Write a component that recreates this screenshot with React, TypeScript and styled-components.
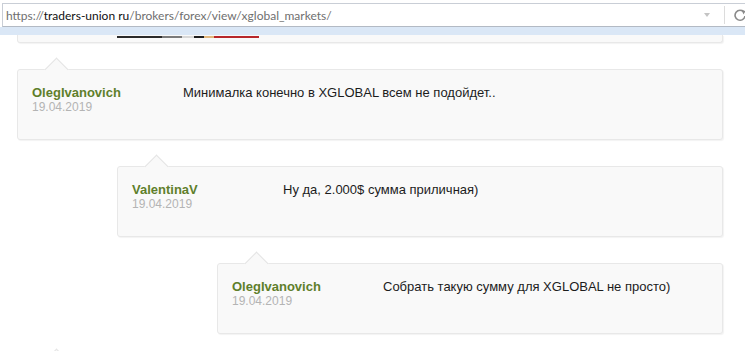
import styled, { createGlobalStyle } from "styled-components";

const GlobalStyle = createGlobalStyle`
	html, body {
		margin: 0;
		padding: 0;
		background: #fff;
		overflow: hidden;
	}
	body {
		width: 745px;
		height: 351px;
		font-family: "Liberation Sans", Arial, sans-serif;
	}
`

const Window = styled.div`
	display: flex;
	flex-direction: column;
	height: 351px;
	overflow: hidden;

	& > * {
		flex: none;
	}
`

const AddressBar = styled.div`
	display: flex;
	align-items: center;
	height: 22px;
	margin: 3px 0 0 2px;
	border-top: 1px solid #c9ced6;
	border-left: 1px solid #c9ced6;
	border-bottom: 1px solid #b3bac4;
	background: #fff;
`

const Url = styled.div`
	flex: 1;
	padding-left: 3px;
	font-family: Lato, "Open Sans", sans-serif;
	font-size: 12px;
	color: #6f6f6f;
	white-space: nowrap;
`

const Domain = styled.span`
	color: #111;
`

const DropArrow = styled.span`
	width: 0;
	height: 0;
	margin-right: 14px;
	border-left: 3px solid transparent;
	border-right: 3px solid transparent;
	border-top: 4px solid #c4c4c4;
`

const Divider = styled.span`
	width: 1px;
	height: 18px;
	background: #dcdcdc;
	margin-right: 8px;
`

const Reload = styled.svg`
	flex: none;
	width: 14px;
	height: 14px;
	margin-right: -2px;
`

const Toolbar = styled.div`
	height: 8px;
	background: #dae7f6;
`

const Feed = styled.div`
	display: flex;
	flex-direction: column;
	padding: 0 22px 0 17px;
`

const Item = styled.div<{ $indent: number }>`
	margin-left: ${p => p.$indent}px;
	margin-top: 14px;
	padding-top: 12px;
`

const Card = styled.div`
	position: relative;
	display: flex;
	box-sizing: border-box;
	height: 71px;
	padding-top: 15px;
	background: #f9f9f9;
	border: 1px solid #e8e8e8;
	border-radius: 3px;
	box-shadow: 1px 1px 1px rgba(0, 0, 0, 0.05);

	&::before {
		content: "";
		position: absolute;
		left: 30px;
		top: -9px;
		width: 16px;
		height: 16px;
		background: #f9f9f9;
		border-top: 1px solid #e4e4e4;
		border-left: 1px solid #e4e4e4;
		transform: rotate(45deg);
	}
`

const CutCard = styled.div`
	box-sizing: border-box;
	height: 8px;
	padding: 1px 0 0 99px;
	background: #f9f9f9;
	border: 1px solid #e8e8e8;
	border-top: none;
	border-radius: 0 0 3px 3px;
	box-shadow: 1px 1px 1px rgba(0, 0, 0, 0.05);
`

const PhotoEdge = styled.div`
	display: flex;
	height: 2px;
	width: 142px;
`

const Stripe = styled.span<{ $w: number; $c: string }>`
	width: ${p => p.$w}px;
	background: ${p => p.$c};
`

const Author = styled.div`
	flex: none;
	width: 165px;
	padding-left: 14px;
	box-sizing: border-box;
	line-height: 15px;
`

const Name = styled.div`
	font-size: 13px;
	font-weight: bold;
	color: #5f7f2b;
`

const Date = styled.div`
	font-size: 12px;
	color: #b4b4b4;
`

const Message = styled.div`
	font-size: 13px;
	line-height: 15px;
	color: #1c1c1c;
`

const comments = [
	{ indent: 0, name: "OlegIvanovich", date: "19.04.2019", text: "Минималка конечно в XGLOBAL всем не подойдет.." },
	{ indent: 100, name: "ValentinaV", date: "19.04.2019", text: "Ну да, 2.000$ сумма приличная)" },
	{ indent: 200, name: "OlegIvanovich", date: "19.04.2019", text: "Собрать такую сумму для XGLOBAL не просто)" },
]

const stripes = [
	{ w: 45, c: "#2a2a2a" },
	{ w: 20, c: "#7a7a7a" },
	{ w: 12, c: "#d8d8d8" },
	{ w: 10, c: "#1e1e1e" },
	{ w: 10, c: "#e3b77c" },
	{ w: 45, c: "#b8262a" },
]

export default function App() {
	return <>
		<GlobalStyle />
		<Window>
			<AddressBar>
				<Url>
					https://<Domain>traders-union ru</Domain>/brokers/forex/view/xglobal_markets/
				</Url>
				<DropArrow />
				<Divider />
				<Reload viewBox="0 0 14 14">
					<path d="M11 4.2A5 5 0 1 0 12 8" fill="none" stroke="#8a8a8a" strokeWidth="1.6" />
					<path d="M8.5 1.5L12.5 3.2L10.5 6.5Z" fill="#8a8a8a" />
				</Reload>
			</AddressBar>
			<Toolbar />
			<Feed>
				<CutCard>
					<PhotoEdge>
						{stripes.map((s, i) => <Stripe key={i} $w={s.w} $c={s.c} />)}
					</PhotoEdge>
				</CutCard>
				{comments.map((c, i) =>
					<Item key={i} $indent={c.indent}>
						<Card>
							<Author>
								<Name>{c.name}</Name>
								<Date>{c.date}</Date>
							</Author>
							<Message>{c.text}</Message>
						</Card>
					</Item>
				)}
				<Item $indent={0}>
					<Card />
				</Item>
			</Feed>
		</Window>
	</>
}
